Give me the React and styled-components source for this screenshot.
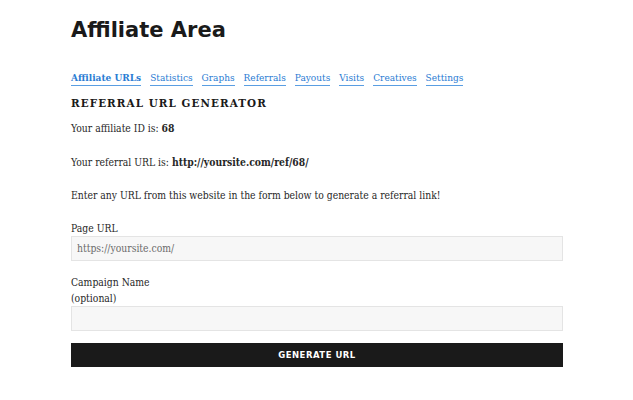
import React from 'react';
import styled, { createGlobalStyle } from 'styled-components';

const GlobalStyle = createGlobalStyle`
  html, body {
    margin: 0;
    padding: 0;
    background: #ffffff;
  }
  body {
    font-family: "DejaVu Serif Condensed", "DejaVu Serif", "Liberation Serif", serif;
    font-stretch: semi-condensed;
    color: #272727;
  }
`;

const Page = styled.div`
  width: 492px;
  padding: 16px 0 0 71px;
`;

const Title = styled.h1`
  margin: 0 0 26px;
  font-family: "DejaVu Sans", "Noto Sans", sans-serif;
  font-stretch: normal;
  font-size: 21px;
  font-weight: 700;
  line-height: 28px;
  color: #1a1a1a;
`;

const Tabs = styled.nav`
  display: flex;
  gap: 9px;
  margin-bottom: 9px;
`;

const Tab = styled.a`
  font-size: 10px;
  line-height: 15px;
  color: #2a7cd3;
  font-weight: ${p => (p.$active ? 700 : 400)};
  text-decoration: none;
  border-bottom: 1px solid #5a9ee2;
  cursor: pointer;
`;

const SectionTitle = styled.h3`
  margin: 0 0 9px;
  font-size: 11.5px;
  line-height: 16px;
  font-weight: 700;
  letter-spacing: 1.1px;
  text-transform: uppercase;
  color: #1a1a1a;
`;

const Para = styled.p`
  margin: 0 0 ${p => (p.$last ? '16.5px' : '17.5px')};
  font-size: 10.3px;
  line-height: 16px;
`;

const Form = styled.form`
  display: flex;
  flex-direction: column;
`;

const Field = styled.div`
  display: flex;
  flex-direction: column;
  margin-bottom: 13px;
`;

const Label = styled.label`
  font-size: 10.3px;
  line-height: 16px;
  font-weight: 400;
`;

const Input = styled.input`
  box-sizing: border-box;
  width: 100%;
  height: 25px;
  padding: 0 5px;
  border: 1px solid #e4e4e4;
  background: #f7f7f7;
  font-family: inherit;
  font-stretch: inherit;
  font-size: 10.3px;
  color: #6b6b6b;
  outline: none;
`;

const Button = styled.button`
  height: 24px;
  margin-top: -1px;
  border: 0;
  background: #1a1a1a;
  color: #ffffff;
  font-family: "DejaVu Sans", "Noto Sans", sans-serif;
  font-stretch: normal;
  font-size: 8.5px;
  font-weight: 700;
  letter-spacing: 0.5px;
  text-transform: uppercase;
  cursor: pointer;
`;

const tabs = ['Affiliate URLs', 'Statistics', 'Graphs', 'Referrals', 'Payouts', 'Visits', 'Creatives', 'Settings'];

export default function App() {
  return (
    <>
      <GlobalStyle />
      <Page>
        <Title>Affiliate Area</Title>
        <Tabs>
          {tabs.map((t, i) => (
            <Tab key={t} $active={i === 0}>{t}</Tab>
          ))}
        </Tabs>
        <SectionTitle>Referral URL Generator</SectionTitle>
        <Para>Your affiliate ID is: <strong>68</strong></Para>
        <Para>Your referral URL is: <strong>http://yoursite.com/ref/68/</strong></Para>
        <Para $last>Enter any URL from this website in the form below to generate a referral link!</Para>
        <Form onSubmit={e => e.preventDefault()}>
          <Field>
            <Label>Page URL</Label>
            <Input defaultValue="https://yoursite.com/" />
          </Field>
          <Field>
            <Label>Campaign Name<br />(optional)</Label>
            <Input />
          </Field>
          <Button type="submit">Generate URL</Button>
        </Form>
      </Page>
    </>
  );
}
